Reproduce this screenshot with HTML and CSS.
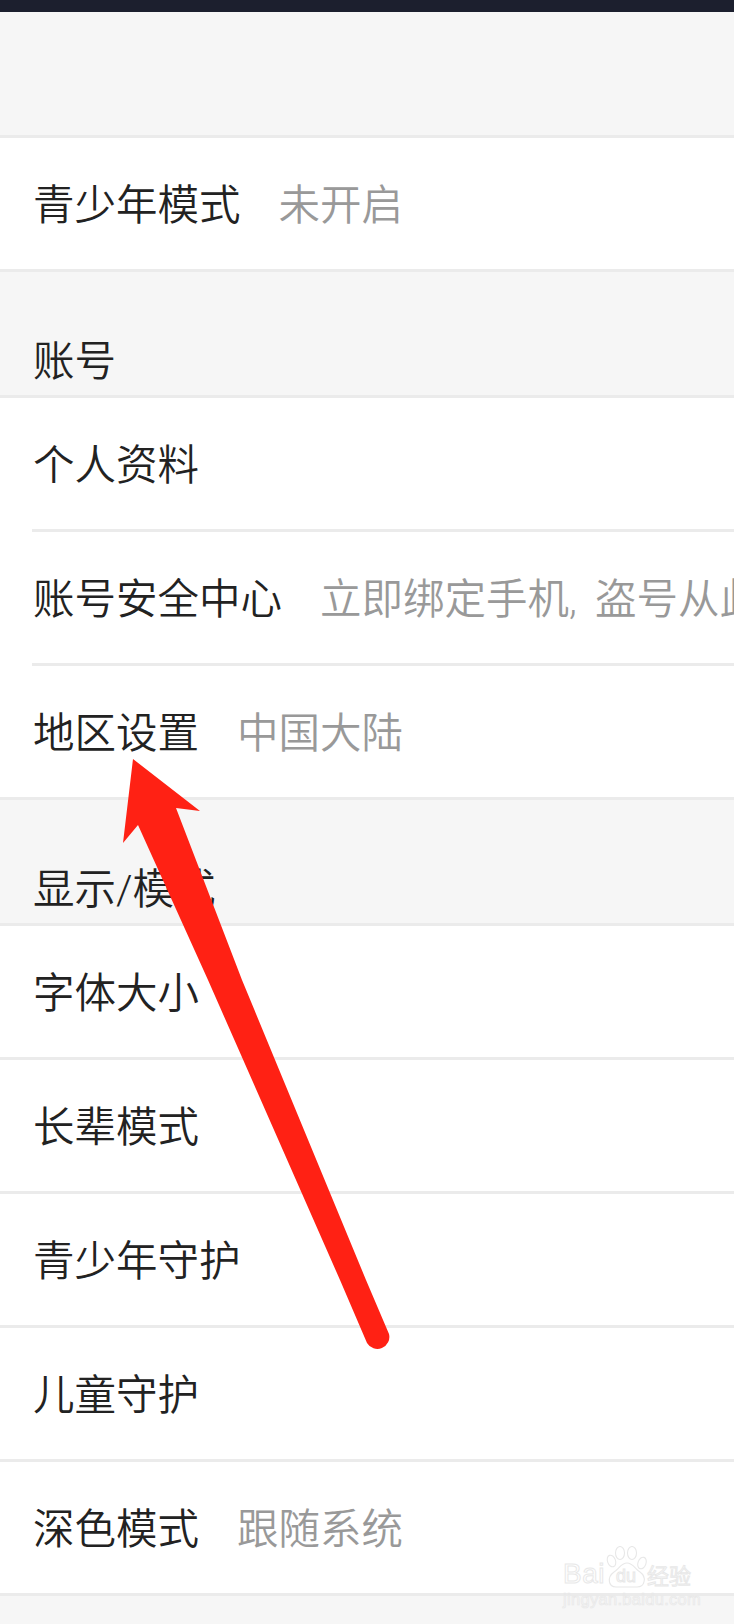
FILE: index.html
```html
<!DOCTYPE html>
<html lang="zh-CN">
<head>
<meta charset="utf-8">
<title>设置</title>
<link rel="stylesheet" href="styles.css">
</head>
<body>
<div class="page">
  <div class="status-bar"></div>
  <div class="spacer"></div>
  <section class="group">
    <div class="row"><span class="label">青少年模式</span><span class="value">未开启</span></div>
  </section>
  <h2 class="section-title">账号</h2>
  <section class="group">
    <div class="row row--inset"><span class="label">个人资料</span></div>
    <div class="row row--inset"><span class="label">账号安全中心</span><span class="value">立即绑定手机, 盗号从此无忧</span></div>
    <div class="row"><span class="label">地区设置</span><span class="value">中国大陆</span></div>
  </section>
  <h2 class="section-title">显示/模式</h2>
  <section class="group">
    <div class="row"><span class="label">字体大小</span></div>
    <div class="row"><span class="label">长辈模式</span></div>
    <div class="row"><span class="label">青少年守护</span></div>
    <div class="row"><span class="label">儿童守护</span></div>
    <div class="row"><span class="label">深色模式</span><span class="value">跟随系统</span></div>
  </section>

  <svg class="arrow" width="734" height="1624" viewBox="0 0 734 1624" aria-hidden="true">
    <path d="M133 759 L200 811 L176 808 L242 980 L366 1280 L389 1334 A12 12 0 0 1 367 1343 L340 1280 L208 980 L138 825 L123 843 Z" fill="#ff2114"/>
  </svg>

  <div class="watermark">
    <span class="wm-bai">Bai</span>
    <svg class="wm-paw" width="42" height="43" viewBox="0 0 42 43" aria-hidden="true">
      <g fill="rgba(255,255,255,.7)" stroke="#e8e8e8" stroke-width="1.1">
        <ellipse cx="5.5" cy="15" rx="4" ry="6" transform="rotate(-20 5.5 15)"/>
        <ellipse cx="14" cy="7" rx="4.5" ry="6.5"/>
        <ellipse cx="26" cy="7" rx="4.5" ry="6.5"/>
        <ellipse cx="36" cy="17" rx="4" ry="6" transform="rotate(20 36 17)"/>
        <path d="M21 17 C27 17 29 23 34 26 C41 31 39 41 31 41 L10 41 C2 41 1 31 8 26 C13 23 15 17 21 17 Z"/>
      </g>
    </svg>
    <span class="wm-du">du</span>
    <span class="wm-cn">经验</span>
    <span class="wm-url">jingyan.baidu.com</span>
  </div>
</div>
</body>
</html>
```
FILE: styles.css
```css
* { box-sizing: border-box; }
html, body { margin: 0; padding: 0; }
body { width: 734px; height: 1624px; overflow: hidden; background: #f6f6f6; }

.page {
  position: relative;
  width: 734px;
  height: 1624px;
  overflow: hidden;
  background: #f6f6f6;
  font-family: Roboto, "Noto Sans CJK SC", sans-serif;
  font-weight: 350;
  color: #222;
}

.status-bar { height: 12px; background: #1c1f2e; }
.spacer { height: 123px; }

.group {
  background: #fff;
  border-top: 3px solid #ebebeb;
}

.row {
  display: flex;
  align-items: center;
  gap: 38px;
  height: 134px;
  padding: 4px 0 0 33px;
  border-bottom: 3px solid #ebebeb;
  white-space: nowrap;
  overflow: hidden;
  font-size: 41.5px;
  line-height: 1;
}
.row--inset { margin-left: 32px; padding-left: 1px; }

.value { color: #999; word-spacing: 8px; }

.section-title {
  margin: 0;
  height: 123px;
  padding: 66px 0 0 33px;
  font-size: 41.5px;
  font-weight: 350;
  line-height: 48px;
  white-space: nowrap;
}

.arrow { position: absolute; left: 0; top: 0; pointer-events: none; }

.watermark {
  position: absolute;
  left: 0;
  top: 0;
  width: 734px;
  height: 1624px;
  pointer-events: none;
  color: transparent;
  font-family: "Liberation Sans", sans-serif;
  -webkit-text-stroke: 1px #e8e8e8;
  white-space: nowrap;
}
.wm-bai, .wm-du, .wm-cn, .wm-url, .wm-paw { position: absolute; line-height: 1; }
.wm-bai { left: 563px; top: 1560px; font-size: 28px; letter-spacing: .5px; }
.wm-paw { left: 606px; top: 1546px; }
.wm-du { left: 616px; top: 1567px; font-size: 18px; }
.wm-cn { left: 647px; top: 1563px; font-size: 22px; font-family: "Noto Sans CJK SC", sans-serif; }
.wm-url { left: 563px; top: 1591px; font-size: 16.5px; letter-spacing: .3px; -webkit-text-stroke-width: .7px; }
```
